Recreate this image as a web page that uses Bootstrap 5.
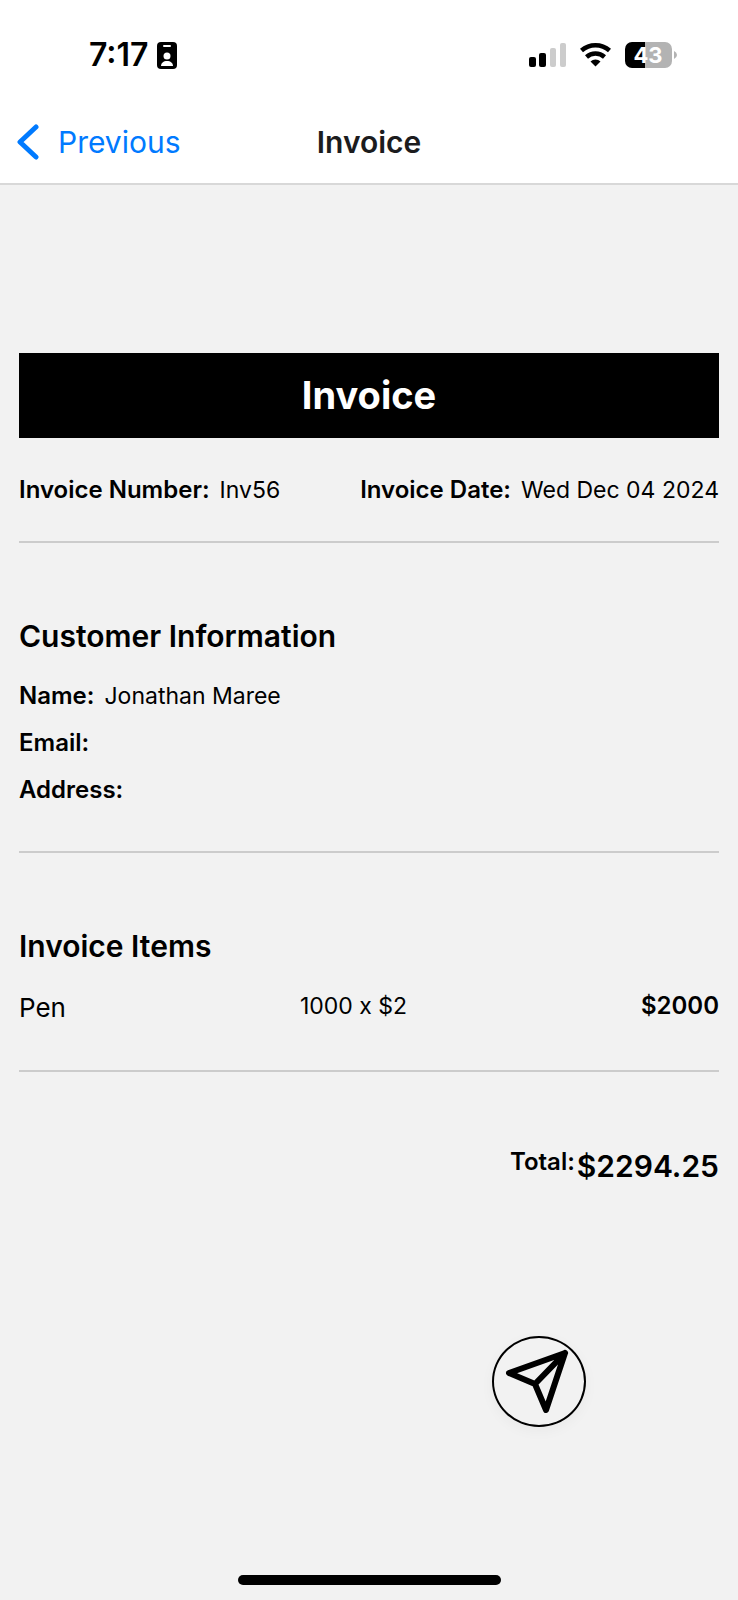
<!DOCTYPE html>
<html lang="en">
<head>
<meta charset="utf-8">
<meta name="viewport" content="width=device-width, initial-scale=1">
<title>Invoice</title>
<link href="https://cdn.jsdelivr.net/npm/bootstrap@5.3.0/dist/css/bootstrap.min.css" rel="stylesheet">
<style>
  body { font-family: Inter, "Liberation Sans", sans-serif; background: #f2f2f2; color: #000; font-size: 23px; line-height: 28px; }
  .app-top { background: #fff; border-bottom: 2px solid #d8d8d8; }
  .status-bar { height: 110px; padding: 0 60px 0 89px; }
  .status-time { font-size: 32px; font-weight: 600; line-height: 38px; }
  .title-bar { display: grid; grid-template-columns: 1fr auto 1fr; height: 73px; padding: 0 17px 9px; font-size: 30px; line-height: 38px; }
  .title-bar h1 { font-size: 30px; line-height: 38px; font-weight: 600; color: #1c1c1e; }
  .back-link { color: #007aff; gap: 18px; }
  .sheet { padding: 168px 19px 0; }
  .banner { background: #000; color: #fff; font-size: 38px; font-weight: 700; line-height: 49px; padding: 18px; margin-bottom: 38px; }
  .block { border-bottom: 2px solid #ccc; margin-bottom: 75px; }
  .block-title { font-size: 30px; line-height: 36px; font-weight: 600; margin-bottom: 28px; }
  .meta { padding-bottom: 37px; }
  .customer { padding-bottom: 28px; }
  .items { padding-bottom: 46px; }
  dl, dt, dd { margin: 0; }
  dt, .strong-text { font-size: 24px; font-weight: 600; }
  .pair { gap: 10px; }
  .customer .pair { margin-bottom: 19px; }
  .item-name { font-size: 26px; line-height: 32px; }
  .total-row { gap: 2px; padding-top: 1px; }
  .grand { font-size: 30px; line-height: 36px; font-weight: 600; }
  .send-row { padding: 152px 133px 40px 0; }
  .send-btn { width: 94px; height: 91px; border: 2px solid #000; border-radius: 50%; background: #f2f2f2; box-shadow: 0 4px 14px rgba(0,0,0,.04); }
  .home-bar { width: 263px; height: 10px; border-radius: 5px; background: #000; margin-bottom: 15px; }
</style>
</head>
<body class="min-vh-100 d-flex flex-column">
<header class="app-top">
  <div class="status-bar d-flex justify-content-between align-items-center">
    <div class="d-flex align-items-center">
      <span class="status-time">7:17</span>
      <svg class="ms-2" width="20" height="27" viewBox="0 0 20 27" aria-hidden="true">
        <rect width="20" height="27" rx="4"/>
        <rect x="6" y="3" width="8" height="2" rx="1" fill="#fff"/>
        <circle cx="10" cy="14" r="3.500" fill="#fff"/>
        <path d="M4 24c0-3 2.500-5 6-5s6 2 6 5z" fill="#fff"/>
      </svg>
    </div>
    <svg width="149" height="28" viewBox="0 0 149 28" role="img" aria-label="Signal, Wi-Fi, battery 43 percent">
      <rect x="0" y="16" width="7" height="10" rx="2"/>
      <rect x="10" y="12" width="7" height="14" rx="2"/>
      <rect x="21" y="7" width="6" height="19" rx="2" fill="#ccc"/>
      <rect x="31" y="2" width="6" height="24" rx="2" fill="#ccc"/>
      <path d="M66.500 25.500l-5-5a7.500 7.500 0 0 1 10 0z"/>
      <path d="M57.500 16a13.500 13.500 0 0 1 18 0" fill="none" stroke="#000" stroke-width="4.500"/>
      <path d="M52.500 9.500a21 21 0 0 1 28 0" fill="none" stroke="#000" stroke-width="4.500"/>
      <path d="M104 1h-1a7 7 0 0 0-7 7v12a7 7 0 0 0 7 7h13V1z"/>
      <path d="M116 1h20a7 7 0 0 1 7 7v12a7 7 0 0 1-7 7h-20z" fill="#b3b3b3"/>
      <path d="M145 10q3 1.500 3 4t-3 4z" fill="#b3b3b3"/>
      <text x="119" y="22" text-anchor="middle" font-size="22" font-weight="700" fill="#fff">43</text>
    </svg>
  </div>
  <nav class="title-bar align-items-center" aria-label="Page">
    <a href="#" class="back-link d-flex align-items-center text-decoration-none">
      <svg width="23" height="36" viewBox="0 0 23 36" fill="none" stroke="#007aff" stroke-width="5" stroke-linecap="round" stroke-linejoin="round" aria-hidden="true"><path d="M19 3L3 18l16 15"/></svg>
      <span>Previous</span>
    </a>
    <h1 class="m-0">Invoice</h1>
  </nav>
</header>

<main class="sheet">
  <h2 class="banner text-center">Invoice</h2>
  <section class="block meta">
    <dl class="d-flex justify-content-between">
      <div class="d-flex pair"><dt>Invoice Number:</dt><dd>Inv56</dd></div>
      <div class="d-flex pair"><dt>Invoice Date:</dt><dd>Wed Dec 04 2024</dd></div>
    </dl>
  </section>
  <section class="block customer">
    <h2 class="block-title">Customer Information</h2>
    <dl>
      <div class="d-flex pair"><dt>Name:</dt><dd>Jonathan Maree</dd></div>
      <div class="d-flex pair"><dt>Email:</dt><dd></dd></div>
      <div class="d-flex pair"><dt>Address:</dt><dd></dd></div>
    </dl>
  </section>
  <section class="block items">
    <h2 class="block-title">Invoice Items</h2>
    <table class="d-block">
      <tbody class="d-block">
        <tr class="d-flex justify-content-between">
          <td class="item-name p-0">Pen</td>
          <td class="p-0">1000 x $2</td>
          <td class="p-0 strong-text">$2000</td>
        </tr>
      </tbody>
    </table>
  </section>
  <div class="total-row d-flex justify-content-end">
    <span class="strong-text">Total:</span>
    <span class="grand">$2294.25</span>
  </div>
  <div class="send-row d-flex justify-content-end">
    <button type="button" class="send-btn p-0 d-flex align-items-center justify-content-center" aria-label="Send invoice">
      <svg width="90" height="87" viewBox="0 0 90 87" fill="none" stroke="#000" stroke-width="6" stroke-linecap="round" stroke-linejoin="round" aria-hidden="true"><path d="M71 15L15 35l26 11 11 26zM41 46l30-31"/></svg>
    </button>
  </div>
</main>
<div class="home-bar mt-auto mx-auto"></div>
<script src="https://cdn.jsdelivr.net/npm/bootstrap@5.3.0/dist/js/bootstrap.bundle.min.js"></script>
</body>
</html>
